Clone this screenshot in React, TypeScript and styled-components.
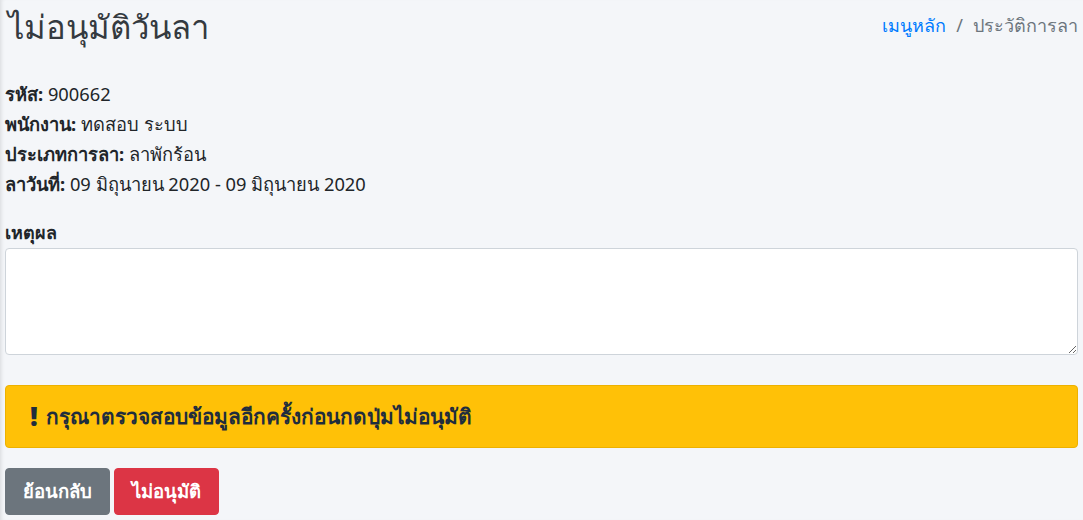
import React from "react";
import styled, { createGlobalStyle } from "styled-components";

const Global = createGlobalStyle`
  html, body { margin: 0; padding: 0; background: #f4f6f9; }
  body { font-family: "Noto Sans", "Open Sans", sans-serif; color: #212529; font-size: 18px; }
  * { box-sizing: border-box; }
`;

const Page = styled.div`
  min-height: 520px;
  padding: 0 5px;
  box-shadow: inset 4px 0 4px -3px rgba(0,0,0,0.12);
`;

const Header = styled.div`
  display: flex;
  justify-content: space-between;
  align-items: center;
  height: 54px;
`;

const Title = styled.h1`
  margin: 0 0 0 3px;
  font-size: 32.8px;
  font-weight: 400;
  line-height: 1.2;
  color: #343a40;
`;

const Crumbs = styled.ol`
  list-style: none;
  margin: 0 0 4px;
  padding: 0;
  display: flex;
  font-size: 18px;
  color: #6c757d;
`;

const Crumb = styled.li`
  & + &::before {
    content: "/";
    padding: 0 10px;
    color: #6c757d;
  }
`;

const CrumbLink = styled.a`
  color: #007bff;
  text-decoration: none;
`;

const Info = styled.div`
  margin-top: 25px;
  line-height: 30px;
  font-size: 18.3px;
`;

const Line = styled.div`
  color: #212529;
`;

const Label = styled.b`
  font-weight: 700;
`;

const Field = styled.div`
  margin-top: 21px;
`;

const FieldLabel = styled.label`
  display: block;
  font-weight: 700;
  line-height: 24px;
  margin-bottom: 4px;
`;

const TextArea = styled.textarea`
  display: block;
  width: 100%;
  height: 107px;
  border: 1px solid #ced4da;
  border-radius: 4px;
  background: #fff;
  font: inherit;
  padding: 6px 12px;
  resize: vertical;
  outline: none;
`;

const Alert = styled.div`
  margin-top: 30px;
  height: 63px;
  background: #ffc107;
  border: 1px solid #edb100;
  border-radius: 4px;
  color: #1f2d3d;
  font-weight: 700;
  display: flex;
  align-items: center;
  padding: 0 24px;
  gap: 8px;
  font-size: 20.8px;
`;

const Bang = styled.span`
  font-size: 27px;
  font-weight: 900;
  line-height: 1;
  margin-top: -2px;
`;

const Actions = styled.div`
  margin-top: 20px;
  display: flex;
  gap: 4px;
`;

const Button = styled.button<{ $variant: "secondary" | "danger" }>`
  height: 47px;
  padding: 0 17px;
  border: 1px solid ${(p) => (p.$variant === "danger" ? "#dc3545" : "#6c757d")};
  background: ${(p) => (p.$variant === "danger" ? "#dc3545" : "#6c757d")};
  color: #fff;
  border-radius: 4px;
  font: inherit;
  font-size: 18.5px;
  font-weight: 700;
  cursor: pointer;
`;

export default function App() {
  return (
    <>
      <Global />
      <Page>
        <Header>
          <Title>ไม่อนุมัติวันลา</Title>
          <Crumbs>
            <Crumb><CrumbLink href="#">เมนูหลัก</CrumbLink></Crumb>
            <Crumb>ประวัติการลา</Crumb>
          </Crumbs>
        </Header>
        <Info>
          <Line><Label>รหัส:</Label> 900662</Line>
          <Line><Label>พนักงาน:</Label> ทดสอบ ระบบ</Line>
          <Line><Label>ประเภทการลา:</Label> ลาพักร้อน</Line>
          <Line><Label>ลาวันที่:</Label> 09 มิถุนายน 2020 - 09 มิถุนายน 2020</Line>
        </Info>
        <Field>
          <FieldLabel>เหตุผล</FieldLabel>
          <TextArea />
        </Field>
        <Alert><Bang>!</Bang> กรุณาตรวจสอบข้อมูลอีกครั้งก่อนกดปุ่มไม่อนุมัติ</Alert>
        <Actions>
          <Button $variant="secondary">ย้อนกลับ</Button>
          <Button $variant="danger">ไม่อนุมัติ</Button>
        </Actions>
      </Page>
    </>
  );
}
